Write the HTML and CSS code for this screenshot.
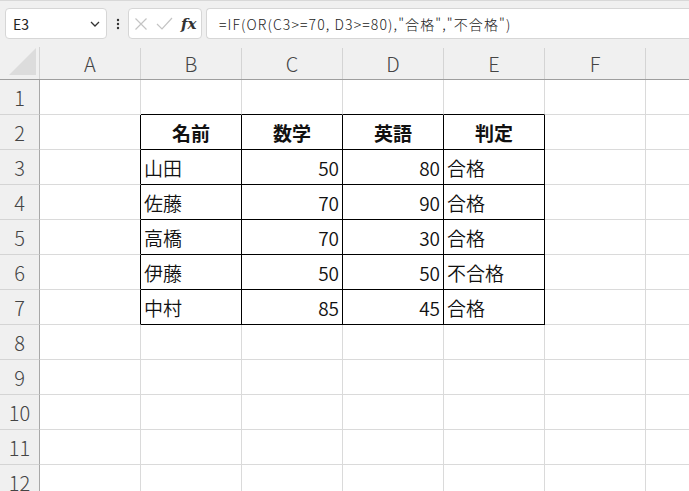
FILE: index.html
```html
<!DOCTYPE html>
<html lang="ja">
<head>
<meta charset="utf-8">
<link rel="stylesheet" href="styles.css">
</head>
<body>
<div class="toolbar">
  <div class="namebox">
    <span class="nameval">E3</span>
    <svg class="chev" width="10" height="6" viewBox="0 0 10 6"><path d="M1 1 L5 5 L9 1" fill="none" stroke="#333" stroke-width="1.3"/></svg>
  </div>
  <div class="dots">
    <svg width="4" height="12" viewBox="0 0 4 12"><circle cx="2" cy="2" r="1.2" fill="#333"/><circle cx="2" cy="6" r="1.2" fill="#333"/><circle cx="2" cy="10" r="1.2" fill="#333"/></svg>
  </div>
  <div class="fbtns">
    <svg width="14" height="14" viewBox="0 0 14 14"><path d="M1.5 1.5 L12.5 12.5 M12.5 1.5 L1.5 12.5" stroke="#c4c4c4" stroke-width="1.2" fill="none"/></svg>
    <svg width="17" height="13" viewBox="0 0 17 13"><path d="M1 7 L6 12 L16 1" stroke="#c4c4c4" stroke-width="1.2" fill="none"/></svg>
    <span class="fx">fx</span>
  </div>
  <div class="formula">=IF(OR(C3&gt;=70, D3&gt;=80),"合格","不合格")</div>
</div>
<div class="sheet">
  <div class="hrow">
    <div class="corner"><svg width="27" height="27" viewBox="0 0 27 27"><path d="M27 0 L27 27 L0 27 Z" fill="#dcdcdc"/></svg></div>
    <div class="ch">A</div><div class="ch">B</div><div class="ch">C</div><div class="ch">D</div><div class="ch">E</div><div class="ch">F</div><div class="ch last"></div>
  </div>
  <div class="row"><div class="rh">1</div><div class="c"></div><div class="c tb"></div><div class="c tb"></div><div class="c tb"></div><div class="c tb"></div><div class="c"></div><div class="c last"></div></div>
  <div class="row"><div class="rh">2</div><div class="c tr"></div><div class="c tb tr hd">名前</div><div class="c tb tr hd">数学</div><div class="c tb tr hd">英語</div><div class="c tb tr hd">判定</div><div class="c"></div><div class="c last"></div></div>
  <div class="row"><div class="rh">3</div><div class="c tr"></div><div class="c tb tr tx">山田</div><div class="c tb tr num">50</div><div class="c tb tr num">80</div><div class="c tb tr tx">合格</div><div class="c"></div><div class="c last"></div></div>
  <div class="row"><div class="rh">4</div><div class="c tr"></div><div class="c tb tr tx">佐藤</div><div class="c tb tr num">70</div><div class="c tb tr num">90</div><div class="c tb tr tx">合格</div><div class="c"></div><div class="c last"></div></div>
  <div class="row"><div class="rh">5</div><div class="c tr"></div><div class="c tb tr tx">高橋</div><div class="c tb tr num">70</div><div class="c tb tr num">30</div><div class="c tb tr tx">合格</div><div class="c"></div><div class="c last"></div></div>
  <div class="row"><div class="rh">6</div><div class="c tr"></div><div class="c tb tr tx">伊藤</div><div class="c tb tr num">50</div><div class="c tb tr num">50</div><div class="c tb tr tx">不合格</div><div class="c"></div><div class="c last"></div></div>
  <div class="row"><div class="rh">7</div><div class="c tr"></div><div class="c tb tr tx">中村</div><div class="c tb tr num">85</div><div class="c tb tr num">45</div><div class="c tb tr tx">合格</div><div class="c"></div><div class="c last"></div></div>
  <div class="row"><div class="rh">8</div><div class="c"></div><div class="c"></div><div class="c"></div><div class="c"></div><div class="c"></div><div class="c"></div><div class="c last"></div></div>
  <div class="row"><div class="rh">9</div><div class="c"></div><div class="c"></div><div class="c"></div><div class="c"></div><div class="c"></div><div class="c"></div><div class="c last"></div></div>
  <div class="row"><div class="rh">10</div><div class="c"></div><div class="c"></div><div class="c"></div><div class="c"></div><div class="c"></div><div class="c"></div><div class="c last"></div></div>
  <div class="row"><div class="rh">11</div><div class="c"></div><div class="c"></div><div class="c"></div><div class="c"></div><div class="c"></div><div class="c"></div><div class="c last"></div></div>
  <div class="row"><div class="rh">12</div><div class="c"></div><div class="c"></div><div class="c"></div><div class="c"></div><div class="c"></div><div class="c"></div><div class="c last"></div></div>
</div>
</body>
</html>
```
FILE: styles.css
```css
html, body {
  margin: 0;
  padding: 0;
  width: 689px;
  height: 491px;
  overflow: hidden;
  background: #ffffff;
  font-family: "Noto Sans CJK JP", "Noto Sans", sans-serif;
}

.toolbar {
  height: 47px;
  box-sizing: border-box;
  background: #f0f0f0;
  border-top: 1px solid #d8d8d8;
  display: flex;
  align-items: flex-start;
  padding-top: 7px;
  padding-left: 5px;
}

.namebox {
  width: 102px;
  flex: none;
  height: 31px;
  box-sizing: border-box;
  background: #fff;
  border: 1px solid #d6d6d6;
  border-radius: 4px;
  display: flex;
  align-items: center;
  justify-content: space-between;
  padding: 0 6px 0 7px;
}

.nameval {
  font-size: 14px;
  color: #222;
}

.dots {
  width: 21px;
  flex: none;
  height: 31px;
  display: flex;
  align-items: center;
  justify-content: center;
}

.fbtns {
  width: 74px;
  flex: none;
  height: 31px;
  box-sizing: border-box;
  background: #fff;
  border: 1px solid #d6d6d6;
  border-radius: 4px;
  display: flex;
  align-items: center;
  gap: 8px;
  padding-left: 5px;
}

.fx {
  font-family: "DejaVu Serif", "Liberation Serif", serif;
  font-style: italic;
  font-weight: bold;
  font-size: 15px;
  color: #333;
}

.formula {
  flex: 1;
  height: 31px;
  box-sizing: border-box;
  margin-left: 4px;
  background: #fff;
  border: 1px solid #d6d6d6;
  border-right: none;
  border-radius: 4px 0 0 4px;
  display: flex;
  align-items: center;
  padding-left: 12px;
  font-size: 14px;
  font-weight: 300;
  letter-spacing: 1.1px;
  color: #222;
  white-space: nowrap;
}

.sheet {
  display: flex;
  flex-direction: column;
}

.hrow {
  display: flex;
  height: 33px;
  background: #f0f0f0;
  box-sizing: border-box;
  border-bottom: 1px solid #9e9e9e;
}

.corner {
  width: 40px;
  flex: none;
  box-sizing: border-box;
  border-right: 1px solid #d4d4d4;
  display: flex;
  align-items: flex-end;
  justify-content: flex-end;
  padding: 0 3px 4px 0;
}

.ch {
  width: 101px;
  flex: none;
  box-sizing: border-box;
  border-right: 1px solid #d4d4d4;
  display: flex;
  align-items: center;
  justify-content: center;
  font-size: 20px;
  font-weight: 300;
  color: #444;
  margin-top: 1px;
}

.ch.last, .c.last {
  width: 50px;
}

.row {
  display: flex;
  height: 35px;
  flex: none;
}

.rh {
  width: 40px;
  flex: none;
  box-sizing: border-box;
  background: #f0f0f0;
  border-right: 1px solid #a8a8a8;
  border-bottom: 1px solid #d4d4d4;
  display: flex;
  align-items: center;
  justify-content: center;
  font-size: 20px;
  font-weight: 300;
  color: #444;
}

.c {
  width: 101px;
  flex: none;
  box-sizing: border-box;
  border-right: 1px solid #dadada;
  border-bottom: 1px solid #dadada;
  display: flex;
  align-items: center;
  font-size: 19px;
  font-weight: 350;
  color: #111;
  padding-top: 1px;
}

.c.tb { border-bottom-color: #000; }
.c.tr { border-right-color: #000; }

.hd {
  justify-content: center;
  font-weight: bold;
}

.tx {
  padding-left: 3px;
}

.num {
  justify-content: flex-end;
  padding-right: 3px;
}
```
